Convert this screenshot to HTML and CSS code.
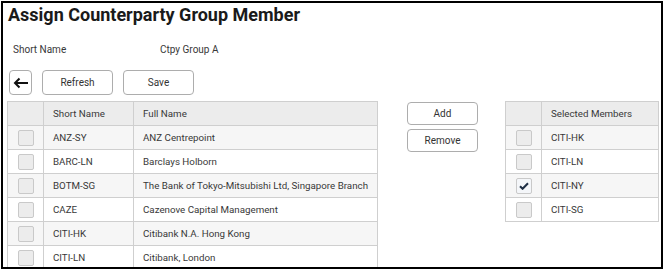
FILE: index.html
```html
<!DOCTYPE html>
<html>
<head>
    <link rel="stylesheet" href="styles.css">
</head>
<body>
    <div class="frame">
        <h1 class="title">Assign Counterparty Group Member</h1>

        <div class="info">
            <span class="info-label">Short Name</span>
            <span class="info-value">Ctpy Group A</span>
        </div>

        <div class="toolbar">
            <button type="button" class="btn btn-back" aria-label="Back">
                <svg width="16" height="12" viewBox="0 0 16 12">
                    <path d="M15 6H2M6.5 1.5L2 6l4.5 4.5" fill="none" stroke="#111" stroke-width="2"/>
                </svg>
            </button>
            <button type="button" class="btn btn-wide">Refresh</button>
            <button type="button" class="btn btn-wide">Save</button>
        </div>

        <div class="content">
            <!-- Available counterparties -->
            <table class="grid grid-main">
                <thead>
                    <tr>
                        <th class="col-check"></th>
                        <th class="col-short">Short Name</th>
                        <th>Full Name</th>
                    </tr>
                </thead>
                <tbody>
                    <tr><td class="col-check"><span class="check"></span></td><td>ANZ-SY</td><td>ANZ Centrepoint</td></tr>
                    <tr><td class="col-check"><span class="check"></span></td><td>BARC-LN</td><td>Barclays Holborn</td></tr>
                    <tr><td class="col-check"><span class="check"></span></td><td>BOTM-SG</td><td>The Bank of Tokyo-Mitsubishi Ltd, Singapore Branch</td></tr>
                    <tr><td class="col-check"><span class="check"></span></td><td>CAZE</td><td>Cazenove Capital Management</td></tr>
                    <tr><td class="col-check"><span class="check"></span></td><td>CITI-HK</td><td>Citibank N.A. Hong Kong</td></tr>
                    <tr><td class="col-check"><span class="check"></span></td><td>CITI-LN</td><td>Citibank, London</td></tr>
                </tbody>
            </table>

            <div class="actions">
                <button type="button" class="btn btn-wide">Add</button>
                <button type="button" class="btn btn-wide">Remove</button>
            </div>

            <!-- Selected members -->
            <table class="grid grid-side">
                <thead>
                    <tr>
                        <th class="col-check"></th>
                        <th>Selected Members</th>
                    </tr>
                </thead>
                <tbody>
                    <tr><td class="col-check"><span class="check"></span></td><td>CITI-HK</td></tr>
                    <tr><td class="col-check"><span class="check"></span></td><td>CITI-LN</td></tr>
                    <tr>
                        <td class="col-check">
                            <span class="check checked">
                                <svg width="10" height="8" viewBox="0 0 10 8">
                                    <path d="M1 4.2l2.6 2.6L9 1.2" fill="none" stroke="#1f2f45" stroke-width="2"/>
                                </svg>
                            </span>
                        </td>
                        <td>CITI-NY</td>
                    </tr>
                    <tr><td class="col-check"><span class="check"></span></td><td>CITI-SG</td></tr>
                </tbody>
            </table>
        </div>
    </div>
</body>
</html>
```

FILE: styles.css
```css
body {
    margin: 0;
    font-family: Roboto, "Liberation Sans", Arial, sans-serif;
    color: #383838;
    background: #fff;
}

.frame {
    margin: 1px;
    width: 658px;
    height: 264px;
    border: 2px solid #000;
    overflow: hidden;
}

.title {
    margin: 0 0 0 5px;
    font-size: 18px;
    line-height: 24px;
    font-weight: 700;
    color: #1a1a1a;
}

.info {
    display: flex;
    margin-top: 15px;
    padding-left: 10px;
    font-size: 10px;
    line-height: 16px;
}

.info-label {
    width: 147px;
}

.toolbar {
    display: flex;
    gap: 10px;
    margin-top: 12px;
    padding-left: 6px;
}

.btn {
    box-sizing: border-box;
    height: 25px;
    padding: 0;
    background: #fff;
    border: 1px solid #adadad;
    border-radius: 4px;
    font-family: inherit;
    font-size: 10px;
    color: #333;
    cursor: pointer;
}

.btn-back {
    width: 23px;
    display: flex;
    align-items: center;
    justify-content: center;
}

.btn-wide {
    width: 71px;
}

.content {
    display: flex;
    align-items: flex-start;
    margin-top: 6px;
    padding-left: 4px;
}

.grid {
    border-collapse: collapse;
    table-layout: fixed;
    font-size: 9.75px;
}

.grid th,
.grid td {
    height: 23px;
    padding: 0 0 0 9px;
    border: 1px solid #cfcfcf;
    text-align: left;
    font-weight: 400;
    white-space: nowrap;
}

.grid th {
    background: #ececec;
}

.grid tbody tr:nth-child(odd) td {
    background: #f6f6f6;
}

.grid .col-check {
    width: 35px;
    padding: 0;
    text-align: center;
}

.grid-main {
    width: 371px;
}

.grid-main .col-short {
    width: 80px;
}

.grid-side {
    width: 154px;
    margin-left: 27px;
}

.actions {
    display: flex;
    flex-direction: column;
    gap: 4px;
    margin-left: 29px;
    padding-top: 1px;
}

.actions .btn {
    height: 23px;
}

.check {
    display: inline-flex;
    align-items: center;
    justify-content: center;
    box-sizing: border-box;
    width: 16px;
    height: 16px;
    vertical-align: middle;
    background: #ececec;
    border: 1px solid #c9c9c9;
    border-radius: 2px;
}

.check.checked {
    background: #f4f6f9;
}
```
